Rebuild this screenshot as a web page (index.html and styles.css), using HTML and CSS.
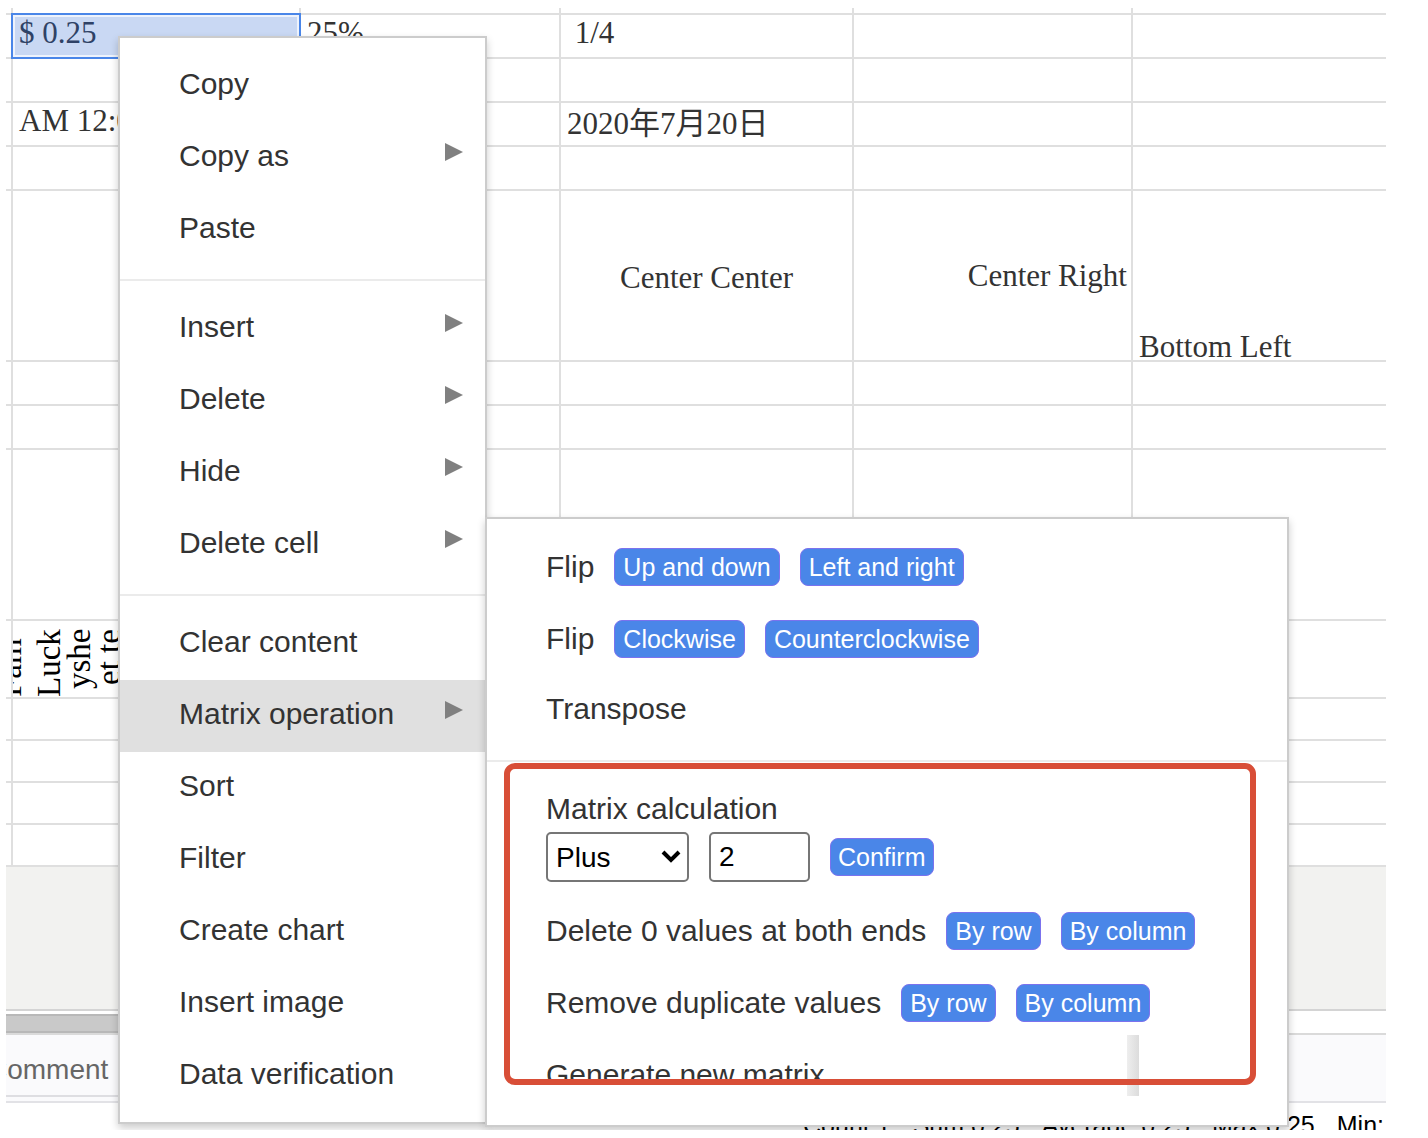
FILE: index.html
```html
<!DOCTYPE html>
<html lang="en">

<head>
    <meta charset="UTF-8">
    <meta name="viewport" content="width=device-width, initial-scale=1.0">
    <title>Sheet</title>
    <link rel="stylesheet" href="styles.css">
</head>

<body>
    <div class="app">
        <table class="sheet">
            <colgroup>
                <col class="col-edge">
                <col class="col-a">
                <col class="col-b">
                <col class="col-c">
                <col class="col-d">
                <col>
            </colgroup>
            <tbody>
                <tr class="row-edge"><td></td><td></td><td></td><td></td><td></td><td></td></tr>
                <tr>
                    <td></td>
                    <td class="selected">$ 0.25</td>
                    <td>25%</td>
                    <td>&nbsp;1/4</td>
                    <td></td>
                    <td></td>
                </tr>
                <tr><td></td><td></td><td></td><td></td><td></td><td></td></tr>
                <tr>
                    <td></td>
                    <td>AM 12:00</td>
                    <td></td>
                    <td class="middle">2020年7月20日</td>
                    <td></td>
                    <td></td>
                </tr>
                <tr><td></td><td></td><td></td><td></td><td></td><td></td></tr>
                <tr class="row-tall">
                    <td></td>
                    <td></td>
                    <td></td>
                    <td class="middle center">Center Center</td>
                    <td class="middle right">Center Right</td>
                    <td class="bottom">Bottom Left</td>
                </tr>
                <tr><td></td><td></td><td></td><td></td><td></td><td></td></tr>
                <tr><td></td><td></td><td></td><td></td><td></td><td></td></tr>
                <tr class="row-tall"><td></td><td></td><td></td><td></td><td></td><td></td></tr>
                <tr class="row-rotated">
                    <td></td>
                    <td>
                        <div class="rotated">
                            <span>Fam</span>
                            <span>Luck<br>yshe<br>et te</span>
                        </div>
                    </td>
                    <td></td>
                    <td></td>
                    <td></td>
                    <td></td>
                </tr>
                <tr class="row-small"><td></td><td></td><td></td><td></td><td></td><td></td></tr>
                <tr class="row-small"><td></td><td></td><td></td><td></td><td></td><td></td></tr>
                <tr class="row-small"><td></td><td></td><td></td><td></td><td></td><td></td></tr>
                <tr class="row-small"><td></td><td></td><td></td><td></td><td></td><td></td></tr>
            </tbody>
        </table>
        <div class="blank"></div>
        <div class="scrollbar">
            <div class="thumb"></div>
        </div>
        <div class="tabs"><a href="#">Comment</a></div>
        <div class="status">
            <span>Count:1</span>
            <span>Sum:0.25</span>
            <span>Average:0.25</span>
            <span>Max:0.25</span>
            <span>Min:</span>
        </div>

        <div class="menu">
            <button class="item">Copy</button>
            <button class="item more">Copy as</button>
            <button class="item">Paste</button>
            <hr>
            <button class="item more">Insert</button>
            <button class="item more">Delete</button>
            <button class="item more">Hide</button>
            <button class="item more">Delete cell</button>
            <hr>
            <button class="item">Clear content</button>
            <button class="item more active">Matrix operation</button>
            <button class="item">Sort</button>
            <button class="item">Filter</button>
            <button class="item">Create chart</button>
            <button class="item">Insert image</button>
            <button class="item">Data verification</button>
        </div>

        <div class="menu submenu">
            <div class="line">
                <span>Flip</span>
                <button class="btn">Up and down</button>
                <button class="btn">Left and right</button>
            </div>
            <div class="line">
                <span>Flip</span>
                <button class="btn">Clockwise</button>
                <button class="btn">Counterclockwise</button>
            </div>
            <button class="item">Transpose</button>
            <hr>
            <div class="calc">
                <label for="operator">Matrix calculation</label>
                <div class="fields">
                    <div class="select-wrap">
                        <select id="operator">
                            <option>Plus</option>
                            <option>Minus</option>
                            <option>Multiply</option>
                        </select>
                        <svg viewBox="0 0 20 14" width="20" height="14"><path d="M2 2 L10 10 L18 2" fill="none" stroke="#000" stroke-width="4"/></svg>
                    </div>
                    <input type="text" id="amount" value="2" aria-label="Value">
                    <button class="btn">Confirm</button>
                </div>
            </div>
            <div class="line">
                <span>Delete 0 values at both ends</span>
                <button class="btn">By row</button>
                <button class="btn">By column</button>
            </div>
            <div class="line">
                <span>Remove duplicate values</span>
                <button class="btn">By row</button>
                <button class="btn">By column</button>
            </div>
            <div class="line cut">
                <span>Generate new matrix</span>
            </div>
            <div class="shade"></div>
            <div class="frame"></div>
        </div>
    </div>
</body>

</html>
```
FILE: styles.css
```css
* {
    box-sizing: border-box;
}

body {
    margin: 8px 42px 8px 6px;
    background-color: #fff;
    color: #333;
    font-family: "Liberation Sans", Arial, sans-serif;
}

.app {
    position: relative;
    display: flex;
    flex-direction: column;
    height: calc(100vh - 16px);
    overflow: hidden;
}

.app > * {
    flex: none;
}

/* sheet */
.sheet {
    width: 100%;
    table-layout: fixed;
    border-collapse: separate;
    border-spacing: 0;
    font-family: "Liberation Serif", "Noto Sans CJK JP", serif;
    font-size: 31px;
    line-height: 36px;
}

.col-edge {
    width: 7px;
}

.col-a {
    width: 288px;
}

.col-b {
    width: 260px;
}

.col-c {
    width: 293px;
}

.col-d {
    width: 279px;
}

.sheet tr {
    height: 44px;
}

.sheet .row-edge {
    height: 7px;
}

.sheet .row-tall {
    height: 171px;
}

.sheet .row-rotated {
    height: 78px;
}

.sheet .row-small {
    height: 42px;
}

.sheet td {
    padding: 0 6px;
    border-right: 2px solid #dfdfdf;
    border-bottom: 2px solid #dfdfdf;
    vertical-align: top;
    white-space: nowrap;
}

.sheet td:first-child {
    padding: 0;
}

.sheet td:last-child {
    border-right: none;
}

.sheet .selected {
    color: #2f4266;
    background-color: #c9d8f3;
    border-color: #4a86e8;
    box-shadow: inset 0 0 0 2px #eef3fc, -2px -2px 0 #4a86e8, 0 -2px 0 #4a86e8, -2px 0 0 #4a86e8;
}

.sheet .middle {
    vertical-align: middle;
}

.sheet .center {
    padding-top: 4px;
    text-align: center;
}

.sheet .right {
    text-align: right;
    padding-right: 4px;
}

.sheet .bottom {
    vertical-align: bottom;
    line-height: 26px;
}

.sheet .row-rotated td {
    padding: 0;
}

.rotated {
    display: flex;
    gap: 9px;
    height: 76px;
    color: #000;
    font-size: 33px;
    line-height: 30px;
    overflow: hidden;
}

.rotated span {
    padding-bottom: 8px;
    writing-mode: vertical-rl;
    text-align: right;
    transform: rotate(180deg);
}

.rotated span:first-child {
    margin-left: -18px;
    text-align: left;
}

/* bottom bars */
.blank {
    height: 144px;
    background-color: #f2f2f0;
    border-bottom: 2px solid #d4d4d4;
}

.scrollbar {
    height: 24px;
    padding-top: 3px;
    border-bottom: 2px solid #dadada;
}

.thumb {
    width: 30%;
    height: 19px;
    background-color: #c9c9c9;
    border-top: 2px solid #b8b8b8;
    border-bottom: 2px solid #b8b8b8;
}

.tabs {
    height: 68px;
    background-color: #fafafc;
    border-bottom: 2px solid #e2e2e6;
}

.tabs a {
    display: block;
    width: 30%;
    height: 62px;
    margin-left: -19px;
    border-bottom: 2px solid #dedee2;
    color: #666;
    font-size: 28px;
    line-height: 70px;
    text-decoration: none;
}

.status {
    display: flex;
    justify-content: flex-end;
    gap: 22px;
    padding: 8px 2px 0 0;
    color: #000;
    font-size: 25px;
    line-height: 28px;
    white-space: nowrap;
}

/* context menu */
.menu {
    position: absolute;
    left: 112px;
    top: 28px;
    width: 369px;
    padding: 12px 0 10px;
    background-color: #fff;
    border: 2px solid #ccc;
    box-shadow: 0 4px 8px rgba(0, 0, 0, 0.2);
    font-size: 30px;
}

.menu hr {
    margin: 13px 0 12px;
    border: none;
    border-top: 2px solid #ebebeb;
}

.item {
    display: block;
    width: 100%;
    height: 72px;
    padding: 0 0 4px 59px;
    background: none;
    border: none;
    color: #333;
    font: inherit;
    text-align: left;
}

.item.active {
    background-color: #e0e0e0;
}

.more {
    display: flex;
    align-items: center;
    justify-content: space-between;
    padding-right: 22px;
}

.more::after {
    content: "";
    margin-bottom: 9px;
    border-left: 18px solid #808080;
    border-top: 9px solid transparent;
    border-bottom: 9px solid transparent;
}

.submenu {
    left: 479px;
    top: 509px;
    width: 804px;
    padding-bottom: 14px;
}

.line {
    display: flex;
    align-items: center;
    gap: 20px;
    height: 72px;
    padding-left: 59px;
    white-space: nowrap;
}

.btn {
    height: 38px;
    padding: 0 7px;
    background-color: #4a86e8;
    border: 1px solid #7b72ee;
    border-radius: 8px;
    color: #fff;
    font-family: inherit;
    font-size: 25px;
}

.calc {
    padding: 17px 0 8px 59px;
}

.calc label {
    display: block;
    line-height: 36px;
}

.fields {
    display: flex;
    align-items: center;
    gap: 20px;
    height: 60px;
}

.select-wrap {
    position: relative;
}

.select-wrap svg {
    position: absolute;
    right: 8px;
    top: 18px;
    pointer-events: none;
}

.fields select,
.fields input {
    height: 50px;
    padding: 0 8px;
    background-color: #fff;
    border: 2px solid #767676;
    border-radius: 5px;
    color: #000;
    font-family: inherit;
    font-size: 28px;
}

.fields select {
    display: block;
    width: 143px;
    appearance: none;
}

.fields input {
    width: 101px;
}

.line .btn {
    padding: 0 8px;
}

/* last row is scrolled out at the bottom */
.cut {
    align-items: flex-start;
    height: 43px;
    margin-bottom: 29px;
    line-height: 72px;
    overflow: hidden;
}

/* scroll shade and red highlight lie over the submenu */
.shade {
    position: absolute;
    right: 148px;
    bottom: 29px;
    width: 12px;
    height: 61px;
    background: linear-gradient(to right, #eee, #dcdcdc);
}

.frame {
    position: absolute;
    left: 17px;
    right: 31px;
    top: 244px;
    height: 322px;
    border: 6px solid #d84e37;
    border-radius: 11px;
}
```
